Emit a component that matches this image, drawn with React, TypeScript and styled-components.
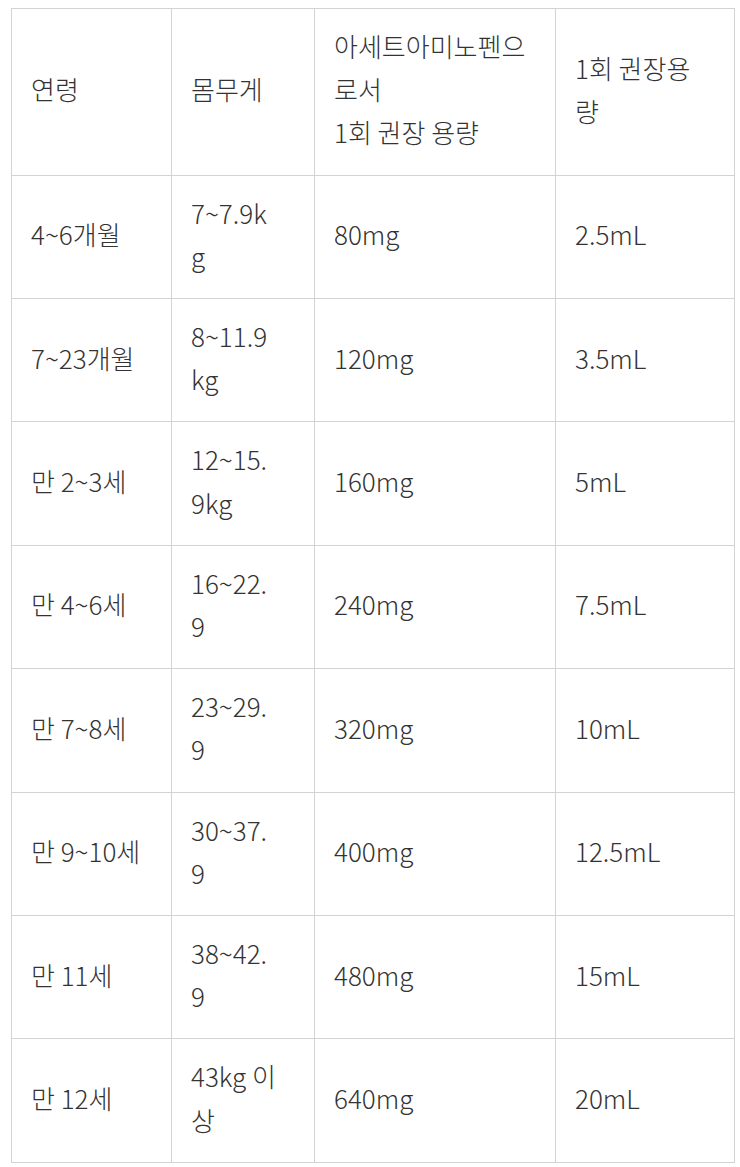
import React from 'react';
import styled, { createGlobalStyle } from 'styled-components';

const GlobalStyle = createGlobalStyle`
  body {
    margin: 0;
    background: #ffffff;
  }
`;

type Row = [string, string, string, string];

// line breaks follow the wrapping in the narrow weight column
const rows: Row[] = [
  ['4~6개월', '7~7.9k\ng', '80mg', '2.5mL'],
  ['7~23개월', '8~11.9\nkg', '120mg', '3.5mL'],
  ['만 2~3세', '12~15.\n9kg', '160mg', '5mL'],
  ['만 4~6세', '16~22.\n9', '240mg', '7.5mL'],
  ['만 7~8세', '23~29.\n9', '320mg', '10mL'],
  ['만 9~10세', '30~37.\n9', '400mg', '12.5mL'],
  ['만 11세', '38~42.\n9', '480mg', '15mL'],
  ['만 12세', '43kg 이\n상', '640mg', '20mL'],
];

const colWidths = [160, 143, 241, 179];

const App = () => {
  return (
    <Page>
      <GlobalStyle />
      <DoseTable>
        <colgroup>
          {colWidths.map((w, i) => (
            <col key={i} style={{ width: w }} />
          ))}
        </colgroup>
        <tbody>
          <tr>
            <Cell>연령</Cell>
            <Cell>몸무게</Cell>
            <Cell>{'아세트아미노펜으\n로서\n1회 권장 용량'}</Cell>
            <Cell>{'1회 권장용\n량'}</Cell>
          </tr>
          {rows.map((r) => (
            <tr key={r[0]}>
              {r.map((v, i) => (
                <Cell key={i}>{v}</Cell>
              ))}
            </tr>
          ))}
        </tbody>
      </DoseTable>
    </Page>
  );
};

export default App;

const Page = styled.div`
  padding: 8px 6px 6px 11px;
`;

const DoseTable = styled.table`
  width: 723px;
  border-collapse: collapse;
  table-layout: fixed;
  font-family: 'Noto Sans CJK KR', 'Noto Sans', sans-serif;
  font-size: 26px;
  font-weight: 300;
  line-height: 43.2px;
  color: #333333;
`;

const Cell = styled.td`
  border: 1px solid #d3d3d3;
  padding: 15px 20px 21px 19px;
  vertical-align: middle;
  white-space: pre-line;
  word-break: break-all;
  text-align: left;
`;
